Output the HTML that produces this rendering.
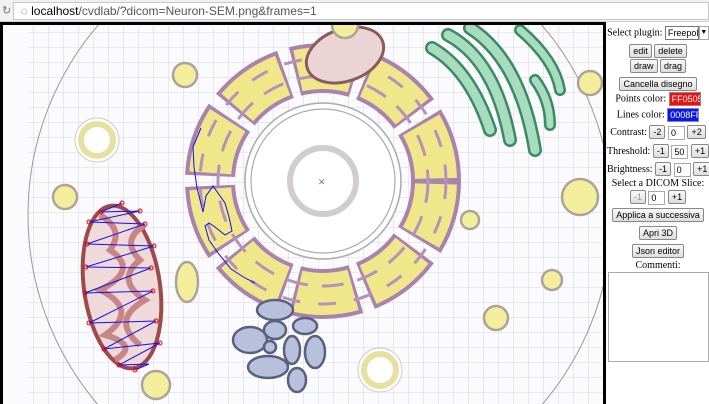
<!DOCTYPE html><html><head><style>
body{margin:0;width:709px;height:401px;overflow:hidden;background:#fff;font-family:"Liberation Serif",serif;position:relative}
#bar{position:absolute;left:0;top:0;width:709px;height:21px;background:#f1f1f1;border-bottom:1px solid #d0d0d0}
#url{position:absolute;left:13px;top:2px;width:694px;height:16px;background:#fff;border:1px solid #c8c8c8;font:12px "Liberation Sans",sans-serif;color:#555;line-height:16px;overflow:hidden}
#url b{font-weight:normal;color:#000}
#cv{position:absolute;left:0;top:22px;width:600px;height:379px;border:3px solid #000;border-bottom:none;overflow:hidden;background:#fff}
#panel{position:absolute;left:607px;top:24px;width:102px;height:377px;overflow:hidden;font-size:10px;text-align:center;color:#000}
.btn{display:inline-block;font:9px "Liberation Sans",sans-serif;border:1px solid #888;border-radius:2px;background:linear-gradient(#fafafa,#ddd);padding:1px 3px;line-height:10px}
.inp{display:inline-block;border:1px solid #aaa;width:13px;height:12px;font:9px "Liberation Sans",sans-serif;text-align:left;padding-left:2px;line-height:12px;vertical-align:middle;overflow:hidden}
.row{position:absolute;left:0;width:102px;white-space:nowrap}
</style></head><body>
<div id="bar"><div style="position:absolute;left:2px;top:4px;font-size:11px;color:#777">&#8635;</div><div id="url">&nbsp;&nbsp;◌ <b>localhost</b>/cvdlab/?dicom=Neuron-SEM.png&amp;frames=1</div></div>
<div id="cv">
<svg width="600" height="379" viewBox="3 25 600 379" xmlns="http://www.w3.org/2000/svg">
<defs><pattern id="g" width="15" height="15" patternUnits="userSpaceOnUse" x="3" y="2"><path d="M15 0H0V15" fill="none" stroke="#c9cfdc" stroke-width="0.8"/></pattern></defs>
<rect x="3" y="25" width="600" height="379" fill="#fbfbfd"/>
<rect x="28" y="25" width="575" height="379" fill="url(#g)"/>
<circle cx="320" cy="215" r="292" fill="none" stroke="#999" stroke-width="1"/>
<circle cx="323" cy="181" r="113" fill="none" stroke="#a982ad" stroke-width="50" stroke-dasharray="62 10"/>
<circle cx="323" cy="181" r="113" fill="none" stroke="#f0e68a" stroke-width="42" stroke-dasharray="56 16" stroke-dashoffset="-3"/>
<circle cx="323" cy="181" r="105" fill="none" stroke="#b891bb" stroke-width="3" stroke-dasharray="22 14"/>
<circle cx="323" cy="181" r="123" fill="none" stroke="#b891bb" stroke-width="3" stroke-dasharray="18 18"/>
<circle cx="323" cy="181" r="78" fill="#fff" stroke="#aaa" stroke-width="1.5"/>
<circle cx="323" cy="181" r="72" fill="none" stroke="#aaa" stroke-width="1.2"/>
<circle cx="323" cy="181" r="33" fill="#fff" stroke="#d0ccd0" stroke-width="6"/>
<text x="318" y="186" font-size="13" fill="#555">×</text>
<ellipse cx="345" cy="55" rx="40" ry="26" transform="rotate(-20 345 55)" fill="#ead4d4" stroke="#8b5a5a" stroke-width="3"/>
<g fill="none" stroke="#3a8a62" stroke-linecap="round">
<path d="M432 48 Q470 70 490 130" stroke-width="14"/><path d="M448 35 Q495 60 510 140" stroke-width="14"/><path d="M470 28 Q520 60 535 150" stroke-width="14"/><path d="M520 30 Q555 60 560 90" stroke-width="12"/><path d="M535 80 Q550 100 550 125" stroke-width="12"/>
</g>
<g fill="none" stroke="#a8dcc0" stroke-linecap="round">
<path d="M432 48 Q470 70 490 130" stroke-width="9"/><path d="M448 35 Q495 60 510 140" stroke-width="9"/><path d="M470 28 Q520 60 535 150" stroke-width="9"/><path d="M520 30 Q555 60 560 90" stroke-width="7"/><path d="M535 80 Q550 100 550 125" stroke-width="7"/>
</g>
<ellipse cx="122" cy="287" rx="38" ry="82" transform="rotate(-8 122 287)" fill="#efd9d9" stroke="#9b4b4b" stroke-width="4"/>
<path d="M100 215 Q125 230 110 250 Q140 270 100 290 Q140 310 105 335 Q140 345 115 360 M145 225 Q120 240 140 260 Q115 280 145 300 Q110 320 140 345" fill="none" stroke="#c98585" stroke-width="6"/>
<polyline fill="none" stroke="#1010ee" stroke-width="1" points="122,203 101,212 140,211 89,222 145,224 87,244 154,246 86,267 151,268 85,293 153,291 89,323 156,321 104,349 160,343 119,365 149,364 135,370"/>
<g fill="none" stroke="#e00" stroke-width="1"><circle cx="122" cy="203" r="2"/><circle cx="101" cy="212" r="2"/><circle cx="140" cy="211" r="2"/><circle cx="89" cy="222" r="2"/><circle cx="145" cy="224" r="2"/><circle cx="87" cy="244" r="2"/><circle cx="154" cy="246" r="2"/><circle cx="86" cy="267" r="2"/><circle cx="151" cy="268" r="2"/><circle cx="85" cy="293" r="2"/><circle cx="153" cy="291" r="2"/><circle cx="89" cy="323" r="2"/><circle cx="156" cy="321" r="2"/><circle cx="104" cy="349" r="2"/><circle cx="160" cy="343" r="2"/><circle cx="119" cy="365" r="2"/><circle cx="135" cy="370" r="2"/></g>
<polyline fill="none" stroke="#1010ee" stroke-width="1" points="201,128 193,147 194,167 197,188 203,212 206,196 213,186 225,203 229,217 232,231 225,235 215,227 209,223 205,226 209,240 218,253 231,269 245,278 255,283"/>
<g fill="#b8c0dc" stroke="#5a6080" stroke-width="2.5">
<ellipse cx="275" cy="310" rx="18" ry="10"/><ellipse cx="305" cy="326" rx="12" ry="8"/><ellipse cx="275" cy="330" rx="11" ry="9"/><ellipse cx="250" cy="340" rx="17" ry="13"/><ellipse cx="270" cy="347" rx="6" ry="6"/><ellipse cx="292" cy="350" rx="8" ry="14"/><ellipse cx="315" cy="352" rx="10" ry="16"/><ellipse cx="268" cy="367" rx="20" ry="11"/><ellipse cx="297" cy="380" rx="9" ry="12"/>
</g>
<g fill="#f4ee9c" stroke="#aaa49a" stroke-width="2.5">
<circle cx="65" cy="197" r="12"/><circle cx="156" cy="385" r="14"/><circle cx="580" cy="197" r="18"/><circle cx="590" cy="83" r="12"/><circle cx="185" cy="75" r="12"/><circle cx="345" cy="25" r="13"/><circle cx="496" cy="318" r="12"/><circle cx="552" cy="280" r="10"/><ellipse cx="187" cy="282" rx="11" ry="20"/><circle cx="470" cy="220" r="9"/>
</g>
<g fill="none" stroke="#ccc" stroke-width="1"><circle cx="97" cy="140" r="22" fill="#fff"/><circle cx="380" cy="370" r="22" fill="#fff"/></g>
<g><circle cx="97" cy="140" r="16" fill="none" stroke="#e8e0a0" stroke-width="6"/><circle cx="380" cy="370" r="16" fill="none" stroke="#e8e0a0" stroke-width="6"/></g>
</svg>
</div>
<div id="panel">
<div class="row" style="top:2px">Select plugin: <span class="inp" style="width:30px;border-color:#777">Freepol</span><span class="inp" style="width:8px;padding:0;text-align:center;font-size:7px">▼</span></div>
<div class="row" style="top:20px"><span class="btn">edit</span> <span class="btn">delete</span></div>
<div class="row" style="top:35px"><span class="btn">draw</span> <span class="btn">drag</span></div>
<div class="row" style="top:53px"><span class="btn">Cancella disegno</span></div>
<div class="row" style="top:68px">Points color: <span class="inp" style="width:28px;background:#f01010;color:#fff;border-color:#888">FF0505</span></div>
<div class="row" style="top:84px">Lines color: <span class="inp" style="width:28px;background:#0a14f8;color:#fff;border-color:#888">0008FF</span></div>
<div class="row" style="top:101px">Contrast: <span class="btn">-2</span> <span class="inp">0</span> <span class="btn">+2</span></div>
<div class="row" style="top:120px">Threshold: <span class="btn">-1</span> <span class="inp">50</span> <span class="btn">+1</span></div>
<div class="row" style="top:138px">Brightness: <span class="btn">-1</span> <span class="inp">0</span> <span class="btn">+1</span></div>
<div class="row" style="top:154px">Select a DICOM Slice:</div>
<div class="row" style="top:166px"><span class="btn" style="color:#999">-1</span> <span class="inp">0</span> <span class="btn">+1</span></div>
<div class="row" style="top:184px"><span class="btn">Applica a successiva</span></div>
<div class="row" style="top:202px"><span class="btn">Apri 3D</span></div>
<div class="row" style="top:220px"><span class="btn">Json editor</span></div>
<div class="row" style="top:236px">Commenti:</div>
<div style="position:absolute;left:1px;top:248px;width:99px;height:88px;border:1px solid #aaa"></div>
</div>
</body></html>
